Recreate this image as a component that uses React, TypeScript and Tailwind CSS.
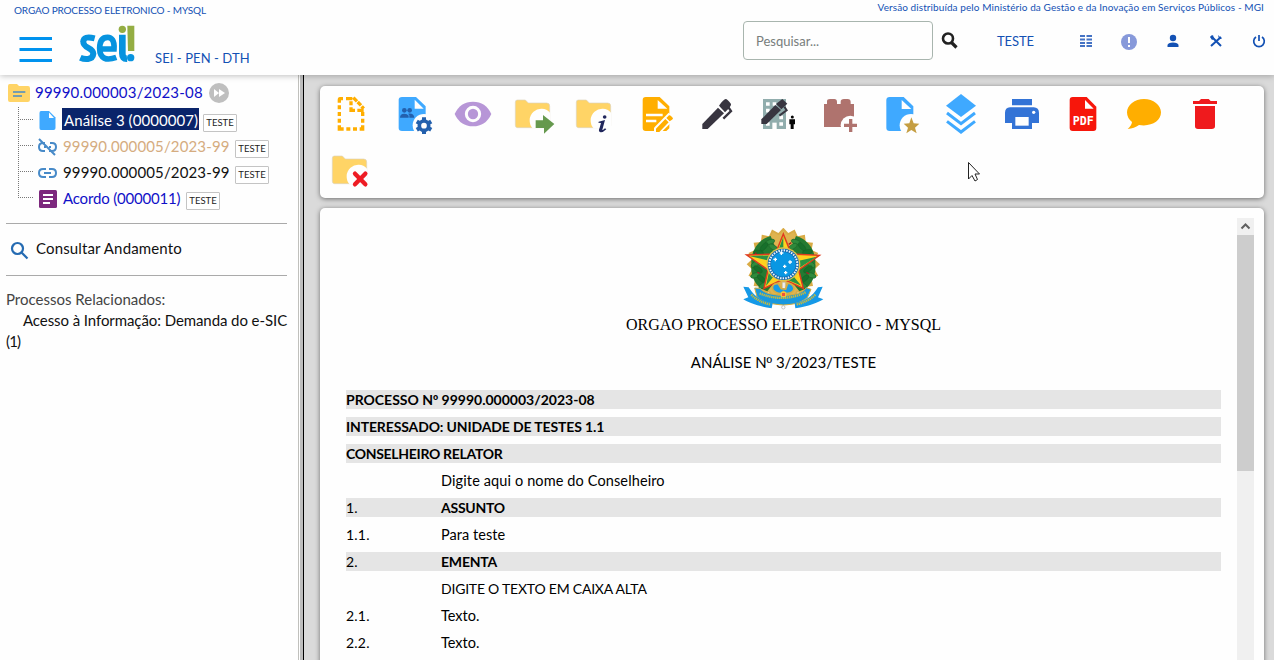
import React from "react";

const RALEWAY = "font-['Lato','Open_Sans',sans-serif]";

function CoatOfArms() {
  const points = (n: number, outer: number, inner: number, cx: number, cy: number) =>
    Array.from({ length: n * 2 }, (_, i) => {
      const r = i % 2 === 0 ? outer : inner;
      const a = (Math.PI * i) / n - Math.PI / 2;
      return `${(cx + r * Math.cos(a)).toFixed(1)},${(cy + r * Math.sin(a)).toFixed(1)}`;
    }).join(" ");
  const leaves: [number, number, number][] = [
    [150, 66, -20], [132, 80, -50], [160, 82, 30], [116, 98, 10], [106, 132, -35], [114, 148, 35], [106, 166, -20], [124, 176, 40],
    [130, 196, -30], [126, 128, 50], [228, 66, 20], [246, 80, 50], [218, 80, -30], [262, 96, -10], [272, 132, 35], [264, 148, -35],
    [274, 166, 20], [254, 176, -40], [248, 196, 30], [252, 128, -50],
  ];
  return (
    <svg width="82" height="82" viewBox="66 24 246 246" className="mr-[2px]">
      <polygon points={points(20, 110, 95, 190, 133)} fill="#d9ab45" />
      <polygon points={points(20, 101, 88, 190, 133)} fill="#dfb450" />
      <path d="M152 48C112 58 92 98 94 130C90 176 112 206 142 214L166 184L140 128L166 82ZM228 48C268 58 288 98 286 130C290 176 268 206 238 214L214 184L240 128L214 82Z" fill="#247a32" />
      {leaves.map(([x, y, r], i) => (
        <ellipse key={i} cx={x} cy={y} rx="15" ry="7" transform={`rotate(${r} ${x} ${y})`} fill={i % 2 ? "#17702b" : "#2f8a3c"} stroke="#176025" strokeWidth="1.5" />
      ))}
      <path d="M105 103l4-5M112 157l7 3M259 157l9 5M206 73l8-5" stroke="#a51f24" strokeWidth="4" />
      <path d="M190 42L214 102L298 106L236 150L250 205L190 177L132 205L144 150L80 105L166 102Z" fill="#ffd21f" stroke="#df3c20" strokeWidth="4.5" />
      <path d="M190 50V133L170 104ZM290 110L190 133L232 148ZM244 197L190 133V174ZM138 198L190 133L148 150ZM88 108L190 133L164 106Z" fill="#2b9344" />
      <circle cx="190" cy="133" r="51" fill="#e2c448" />
      <circle cx="190" cy="133" r="47" fill="#1468ae" />
      <circle cx="190" cy="133" r="42" fill="none" stroke="#e8f5ff" strokeWidth="6" strokeDasharray="4.5 3.4" />
      <circle cx="190" cy="133" r="37" fill="#0997e3" />
      <path d="M184 94v11M179 99h11M166 113v11M160 118h11M210 121v11M205 126h11M194 134v10M189 139h10M197 153v10M192 158h10" stroke="#fff" strokeWidth="4" />
      <path d="M187 187h9v34h-9z" fill="#eee" stroke="#aaa" />
      <path d="M174 190Q154 191 158 208Q165 220 184 221L190 215L200 221Q220 219 222 206Q219 189 203 190L197 207L184 206Z" fill="#189ce5" stroke="#d7ad43" strokeWidth="5" />
      <path d="M104 204L120 205C134 221 158 224 190 227C224 225 248 220 259 203L273 208L262 233C239 251 218 253 190 255C155 252 130 249 111 230Z" fill="#1798df" stroke="#d3ad3f" strokeWidth="3" />
      <path d="M70 200L86 202C103 230 126 244 158 250L155 265C117 260 85 247 70 238L85 232ZM308 200L294 202C277 230 254 244 224 250L226 265C266 260 294 248 310 238L294 232Z" fill="#1599e7" />
      <path d="M94 224Q115 246 150 253M286 224Q263 246 230 253M119 220Q190 249 257 217" fill="none" stroke="#c9ba3b" strokeWidth="7" strokeDasharray="4 2" />
      <path d="M184 217h13v13h-13z" fill="#f0503b" stroke="#f6d53d" strokeWidth="3" />
      <circle cx="190" cy="262" r="5" fill="#fff" stroke="#aaa" strokeWidth="2" />
    </svg>
  );
}

function Tool({ box, label, children }: { box: string; label: string; children: React.ReactNode }) {
  return (
    <button aria-label={label} className="block h-[56px] w-[61px]">
      <svg width="61" height="56" viewBox={box}>{children}</svg>
    </button>
  );
}

const folder = "M606 60H630L639 69H694Q703 69 703 78V136Q703 143 696 143H606Q600 143 600 136V67Q600 60 606 60Z";

function Folder({ x = 0, y = 0 }: { x?: number; y?: number }) {
  return (
    <g transform={`translate(${x} ${y})`}>
      <path d={folder} fill="#ffd466" stroke="#ddd3bd" strokeWidth="2" />
      <path d="M704 98A31 31 0 1 0 652 145H705Z" fill="#fefefe" />
    </g>
  );
}

function Toolbar() {
  return (
    <div className="flex h-[112px] shrink-0 flex-wrap content-start rounded-[5px] bg-[#fefefe] shadow-[0_1px_5px_rgba(0,0,0,0.5)]">
      <Tool label="Incluir Documento" box="15 18 183 168">
        <path d="M84 56H75Q73 56 73 60V68M73 76V88M73 96V108M73 116V128M73 136V147H86M94 147H106M114 147H126M134 147H143V136M143 128V116M143 108V96M93 56H112M115 53L126 64M128 66L138 76M140 79L146 86M108 64V76M108 82V91H120M127 91H146" fill="none" stroke="#ffae00" strokeWidth="10" />
      </Tool>
      <Tool label="Consultar Documento" box="197 18 183 168">
        <path d="M260 51H302L331 79V145Q331 153 322 153H260Q250 153 250 144V60Q250 51 260 51Z" fill="#3fa9ff" />
        <path d="M298 59V86H325Z" fill="#fefefe" />
        <circle cx="326" cy="136" r="34" fill="#fefefe" />
        <g fill="#2360ad"><circle cx="267" cy="91" r="7" /><circle cx="283" cy="91" r="7" /><path d="M254 113Q254 101 267 101Q276 101 280 107V113ZM282 113V106L278 101Q295 98 297 113Z" /></g>
        <circle cx="326" cy="137" r="14" fill="none" stroke="#2360ad" strokeWidth="11" />
        <path d="M326 112V120M326 154V162M304.300 124.500L311 128.500M341 145.500L347.700 149.500M304.300 149.500L311 145.500M341 128.500L347.700 124.500" stroke="#2360ad" strokeWidth="12" />
      </Tool>
      <Tool label="Acompanhamento Especial" box="381 18 183 168">
        <path d="M419 102Q436 65 474 65T529 102Q512 139 474 139T419 102Z" fill="#b796d7" />
        <circle cx="474" cy="102" r="20" fill="none" stroke="#fefefe" strokeWidth="9" />
      </Tool>
      <Tool label="Enviar Processo" box="563 18 183 168">
        <Folder />
        <path d="M661 121H683V105L717 132L686 161V144H661Z" fill="#66994e" />
      </Tool>
      <Tool label="Atualizar Andamento" box="746 18 183 168">
        <Folder x={183} />
        <path d="M850 125L869 120L861 149Q861 153 869 145L873 148Q860 160 854 156Q848 153 853 143L857 129L849 128Z" fill="#20265c" />
        <circle cx="868" cy="111" r="5.5" fill="#20265c" />
      </Tool>
      <Tool label="Editar Conteúdo" box="-15 18 183 168">
        <path d="M47 51H89L118 79V145L109 153H47Q38 153 38 144V60Q38 51 47 51Z" fill="#ffae00" />
        <path d="M83 60V86H112Z" fill="#fefefe" />
        <path d="M48 105H98M48 123H79" stroke="#fefefe" strokeWidth="7" />
        <path d="M72 160V143L116 98L135 116L91 160Z" fill="#fefefe" />
        <path d="M78 156V146L106 117L116 127L88 156ZM109 114L117 106Q120 104 128 113Q131 116 126 119L119 124Z" fill="#ffae00" />
      </Tool>
      <Tool label="Assinar Documento" box="167 18 183 168">
        <path d="M216 132L263 83L281 100L232 147H216Z" fill="#383540" />
        <path d="M266 77Q280 57 286 57Q291 57 302 72Q304 78 284 97Z" fill="#383540" />
        <path d="M293 80L302 93L279 116" fill="none" stroke="#383540" strokeWidth="7" />
      </Tool>
      <Tool label="Gerenciar Assinaturas Externas" box="351 18 183 168">
        <path d="M399 57H468V147H399Z" fill="#91adad" />
        <path d="M408 72H419M428 72H439M448 72H459M408 92H419M448 112H459M408 132H419M448 132H459" stroke="#fefefe" strokeWidth="11" />
        <path d="M427 147V128H440V147Z" fill="#fefefe" />
        <path d="M394 118L436 75L453 90L410 132H394Z" fill="#383540" />
        <path d="M438 72L457 57L472 71L454 88Z" fill="#383540" />
        <path d="M463 80L470 91L448 107" fill="none" stroke="#383540" strokeWidth="6" />
        <circle cx="487" cy="111" r="4.5" fill="#050505" />
        <path d="M478 118H495V133H491V147H482V133H478Z" fill="#050505" />
      </Tool>
      <Tool label="Incluir em Bloco" box="534 18 183 168">
        <path d="M582 72H591V64Q591 57 600 57H613Q621 57 621 66V72H632V65Q632 57 642 57H653Q662 57 662 66V72H672V141H582Z" fill="#af736e" />
        <circle cx="661" cy="136" r="29" fill="#fefefe" />
        <path d="M642 136H681M662 117V156" stroke="#af736e" strokeWidth="10" />
      </Tool>
      <Tool label="Adicionar aos Favoritos" box="717 18 183 168">
        <path d="M779 51H821L850 79V145L840 153H779Q769 153 769 144V60Q769 51 779 51Z" fill="#3fa9ff" />
        <path d="M815 60V87H844Z" fill="#fefefe" />
        <circle cx="843" cy="136" r="34" fill="#fefefe" />
        <path d="M844 112L851 130L868 131L855 143L860 160L844 150L829 160L834 143L821 131L838 130Z" fill="#c59e42" />
      </Tool>
      <Tool label="Versões do Documento" box="-45 18 183 168">
        <path d="M3 77L48 42L93 77L48 111Z" fill="#3fa9ff" />
        <path d="M6 99L48 131L90 99M6 124L48 156L90 124" fill="none" stroke="#3fa9ff" strokeWidth="9" />
      </Tool>
      <Tool label="Imprimir Web" box="138 18 183 168">
        <path d="M201 57H261V76H201ZM195 82H266Q282 83 282 99V129H261V147H201V129H180V99Q180 83 195 82Z" fill="#3373d6" />
        <path d="M211 111H251V137H211Z" fill="#fefefe" /><circle cx="266" cy="97" r="5" fill="#fefefe" />
      </Tool>
      <Tool label="Gerar PDF" box="321 18 183 168">
        <path d="M383 51H425L454 80V144Q454 153 445 153H383Q374 153 374 144V60Q374 51 383 51Z" fill="#f7160b" />
        <path d="M420 60V86H446Z" fill="#fefefe" />
        <text x="415" y="135" textAnchor="middle" textLength="63" lengthAdjust="spacingAndGlyphs" fill="#fff" className="font-['DejaVu_Sans_Mono',monospace] text-[37px] font-bold">PDF</text>
      </Tool>
      <Tool label="Comentários" box="504 18 183 168">
        <path d="M597 57C625 57 648 75 648 97C648 124 618 141 582 135Q568 146 548 147Q560 137 561 126Q546 114 546 97C546 75 569 57 597 57Z" fill="#ffae00" />
      </Tool>
      <Tool label="Excluir" box="687 18 183 168">
        <path d="M744 63H762L768 57H791L797 63H816V72H744ZM750 78H810V139Q810 147 800 147H759Q750 147 750 139Z" fill="#ef1a1d" />
      </Tool>
      <Tool label="Concluir Processo" box="14 186 183 168">
        <Folder x={-549} y={168} />
        <path d="M119 281L150 313M150 281L119 313" stroke="#ee1c24" strokeWidth="13" strokeLinecap="round" />
      </Tool>
    </div>
  );
}

function Tag() {
  return (
    <span className="flex h-[18px] w-[34px] items-center justify-center rounded-[1px] border border-[#c4c4c4] bg-white text-[9.5px] leading-none text-[#222]">
      TESTE
    </span>
  );
}

function Sidebar() {
  return (
    <aside className={`flex w-[298px] shrink-0 flex-col bg-[#fefefe] text-[15px] text-[#111] ${RALEWAY}`}>
      <div className="flex h-[32px] items-center pt-[4px] pl-[8px]">
        <svg width="22" height="18" viewBox="0 0 66 54" className="shrink-0">
          <path d="M5 0H27L33 6H60Q66 6 66 13V47Q66 54 59 54H6Q0 54 0 48V6Q0 0 5 0Z" fill="#ffd466" />
          <path d="M15 24H52M15 36H42" stroke="#478ac8" strokeWidth="5" />
        </svg>
        <span className="mt-[-2px] ml-[5px] w-[169px] text-[15px] tracking-[0.2px] whitespace-nowrap text-[#1010c8]">99990.000003/2023-08</span>
        <svg width="20" height="20" viewBox="0 0 20 20" className="ml-[5px]">
          <circle cx="10" cy="10" r="10" fill="#bfbfbf" /><path d="M5 6L10 10L5 14ZM10 6L16 10L10 14Z" fill="#fff" />
        </svg>
      </div>
      <div className="flex">
        <svg width="37" height="104" viewBox="0 107 37 104" className="shrink-0">
          <path d="M18.5 107V198M18 119.5H34M18 145.5H34M18 171.5H34M18 197.5H34" fill="none" stroke="#777" strokeDasharray="1 1" />
        </svg>
        <div className="flex flex-col">
          <div className="flex h-[26px] items-center">
            <svg width="21" height="22" viewBox="0 0 21 22" className="mt-[2px]"><path d="M4 1H12L18.500 7.500V18Q18.500 20 16.500 20H4Q2.500 20 2.500 18V3Q2.500 1 4 1Z" fill="#3fa9ff" /><path d="M12 2.500V8H17Z" fill="#fff" /></svg>
            <span className="mt-[-2px] ml-[4px] flex h-[22px] w-[137px] items-center bg-[#0a246a] pt-[2px] pl-[2px] tracking-[0.07px] whitespace-nowrap text-white">Análise 3 (0000007)</span>
            <div className="mt-[6px] ml-[4px]"><Tag /></div>
          </div>
          <div className="flex h-[26px] items-center">
            <svg width="21" height="20" viewBox="0 0 21 20" className="mt-[2px]"><path d="M8 6H6Q2 6 2 10T6 14H8M13 6H15Q19 6 19 10T15 14H12M7 10H9M12 10H14M2 2L18 18" fill="none" stroke="#478ac8" strokeWidth="2" /></svg>
            <span className="mt-px ml-[5px] w-[168px] tracking-[0.14px] whitespace-nowrap text-[#d5ac80]">99990.000005/2023-99</span>
            <div className="mt-[6px] ml-[4px]"><Tag /></div>
          </div>
          <div className="flex h-[26px] items-center">
            <svg width="21" height="20" viewBox="0 0 21 20" className="mt-[2px]"><path d="M9 6H6Q2 6 2 10T6 14H9M12 6H15Q19 6 19 10T15 14H12M7 10H14" fill="none" stroke="#478ac8" strokeWidth="2" /></svg>
            <span className="mt-px ml-[5px] w-[168px] tracking-[0.14px] whitespace-nowrap">99990.000005/2023-99</span>
            <div className="mt-[6px] ml-[4px]"><Tag /></div>
          </div>
          <div className="flex h-[26px] items-center">
            <svg width="21" height="20" viewBox="0 0 21 20" className="mt-[2px]"><rect x="2" y="1" width="18" height="18" rx="1.500" fill="#7c287d" /><path d="M6 6H16M6 10H16M6 14H13" stroke="#fff" strokeWidth="2" /></svg>
            <span className="mt-px ml-[5px] w-[119px] tracking-[-0.18px] whitespace-nowrap text-[#1010c8]">Acordo (0000011)</span>
            <div className="mt-[6px] ml-[4px]"><Tag /></div>
          </div>
        </div>
      </div>
      <div className="mt-[12px] mr-[11px] ml-[6px] flex h-[53px] items-center border-y border-[#aaa]">
        <svg width="20" height="20" viewBox="0 0 20 20" className="mt-[2px] ml-[4px]"><circle cx="7.500" cy="7.500" r="5.500" fill="none" stroke="#256bb2" strokeWidth="2.200" /><path d="M11.500 11.500L17.500 17.500" stroke="#256bb2" strokeWidth="2.200" /></svg>
        <span className="mt-[-3px] ml-[6px] tracking-[0.14px] whitespace-nowrap">Consultar Andamento</span>
      </div>
      <div className="mt-[13px] ml-[6px] flex flex-col text-[15px] leading-[21px] whitespace-nowrap">
        <span className="text-[#444]">Processos Relacionados:</span>
        <span className="pl-[17px] tracking-[-0.08px]">Acesso à Informação: Demanda do e-SIC</span>
        <span className="tracking-[-0.8px]">(1)</span>
      </div>
    </aside>
  );
}

function Header() {
  return (
    <header className={`relative z-10 flex h-[75px] shrink-0 justify-between bg-[#fefefe] text-[#1351b4] shadow-[0_1px_6px_rgba(0,0,0,0.25)] ${RALEWAY}`}>
      <div className="flex flex-col pl-[14px]">
        <span className="mt-[4px] text-[10px] leading-[13px] tracking-[-0.16px] whitespace-nowrap">ORGAO PROCESSO ELETRONICO - MYSQL</span>
        <div className="flex">
          <svg width="34" height="27" viewBox="0 0 34 27" className="mt-[19px] ml-[5px]"><path d="M0.500 2.500H33M0.500 13.500H33M0.500 24.500H33" stroke="#0092ee" strokeWidth="3" /></svg>
          <svg width="58" height="40" viewBox="237 72 174 120" className="mt-[7px] ml-[26px]">
            <g fill="none" stroke="#0793df" strokeWidth="18">
              <path d="M284 115Q250 106 250 126C249 145 280 142 280 161C278 182 252 178 241 173" />
              <path d="M301 147H342C344 121 334 112 323 112C304 112 299 127 299 145C299 176 319 183 349 172" strokeWidth="17" />
              <path d="M367 104V160Q367 177 381 176" strokeWidth="20" />
            </g>
            <circle cx="367" cy="88" r="11" fill="#94ad43" /><path d="M382 77H403V153H384Z" fill="#94ad43" /><circle cx="392" cy="173" r="11" fill="#0793df" />
          </svg>
          <span className="mt-[33px] ml-[18px] text-[13px] leading-[16px] tracking-[0.08px] whitespace-nowrap">SEI - PEN - DTH</span>
        </div>
      </div>
      <div className="flex flex-col items-end">
        <span className="mt-px mr-[10px] text-[10px] leading-[13px] tracking-[0.085px] whitespace-nowrap">Versão distribuída pelo Ministério da Gestão e da Inovação em Serviços Públicos - MGI</span>
        <div className="mt-[6px] flex h-[40px] w-[531px] items-center">
          <div className="flex h-[39px] w-[190px] items-center rounded-[4px] border border-[#a8b5ae] pt-[4px] pl-[12px] text-[13px] text-[#777d7c]">Pesquisar...</div>
          <svg width="18" height="18" viewBox="0 0 18 18" className="ml-[8px]"><circle cx="7" cy="7.500" r="5" fill="none" stroke="#222" strokeWidth="2.600" /><path d="M10.500 11.500L15.500 16.500" stroke="#222" strokeWidth="3.200" /></svg>
          <span className="mt-[4px] ml-[38px] w-[37px] text-[13px] tracking-[-0.1px] whitespace-nowrap">TESTE</span>
          <svg width="14" height="14" viewBox="0 0 14 14" className="mt-[2px] ml-[45px]"><path d="M1 2H6M1 5.500H6M1 9H6M1 12H6M7.500 2H13M7.500 5.500H13M7.500 9H13M7.500 12H13" stroke="#4472c4" strokeWidth="2" /></svg>
          <svg width="18" height="18" viewBox="0 0 18 18" className="mt-[3px] ml-[27px]"><circle cx="9" cy="9" r="8" fill="#8799da" /><path d="M9 4V10M9 12V14" stroke="#fff" strokeWidth="2" /></svg>
          <svg width="14" height="14" viewBox="0 0 14 14" className="mt-[2px] ml-[28px]"><circle cx="7" cy="4" r="3.200" fill="#1351b4" /><path d="M1.500 13V11Q2 8.500 7 8.500T12.500 11V13Z" fill="#1351b4" /></svg>
          <svg width="14" height="14" viewBox="0 0 14 14" className="mt-[2px] ml-[29px]"><path d="M2 2L12 12M12 3L2 12" stroke="#1351b4" strokeWidth="2" /><path d="M1 3L4 1L5 5L3 6ZM9 1L13 5L10 5Z" fill="#1351b4" /></svg>
          <svg width="14" height="14" viewBox="0 0 14 14" className="mt-[2px] ml-[29px]"><path d="M7 1V7M4 3A5.300 5.300 0 1 0 10 3" fill="none" stroke="#1351b4" strokeWidth="1.700" /></svg>
        </div>
      </div>
    </header>
  );
}

const rows = [
  { num: "1.", text: "ASSUNTO", style: "font-bold tracking-[-0.25px]", head: true },
  { num: "1.1.", text: "Para teste", style: "text-[14.5px] tracking-[0.05px]" },
  { num: "2.", text: "EMENTA", style: "font-bold tracking-[-0.2px]", head: true },
  { num: "", text: "DIGITE O TEXTO EM CAIXA ALTA", style: "tracking-[-0.22px]" },
  { num: "2.1.", text: "Texto.", style: "text-[14.5px]" },
  { num: "2.2.", text: "Texto.", style: "text-[14.5px]" },
];

function Ordinal() {
  return <span className="font-['Liberation_Sans',sans-serif] leading-none">º</span>;
}

function Document() {
  return (
    <div className="mt-[10px] flex h-[470px] shrink-0 rounded-[5px] bg-[#fefefe] p-[10px] shadow-[0_1px_5px_rgba(0,0,0,0.5)]">
      <article className="flex flex-1 flex-col px-[16px] font-['Lato','Open_Sans',sans-serif] text-[14px] text-black">
        <div className="flex flex-col items-center pt-[10px]">
          <CoatOfArms />
          <p className="mt-[5px] font-['Liberation_Serif',serif] text-[16px] leading-[20px] tracking-[-0.02px]">ORGAO PROCESSO ELETRONICO - MYSQL</p>
          <p className="mt-[17px] h-[20px] text-[15px] leading-[20px]">ANÁLISE N<Ordinal /> 3/2023/TESTE</p>
        </div>
        <div className="mt-[18px] flex flex-col gap-[8px] leading-[19px] whitespace-nowrap">
          <p className="h-[19px] bg-[#e5e5e5] font-bold">PROCESSO N<Ordinal /> 99990.000003/2023-08</p>
          <p className="h-[19px] bg-[#e5e5e5] font-bold tracking-[-0.13px]">INTERESSADO: UNIDADE DE TESTES 1.1</p>
          <p className="h-[19px] bg-[#e5e5e5] font-bold tracking-[-0.3px]">CONSELHEIRO RELATOR</p>
          <p className="h-[19px] pl-[95px] text-[14.5px] tracking-[0.12px]">Digite aqui o nome do Conselheiro</p>
          {rows.map((r, i) => (
            <div key={i} className={r.head ? "flex h-[19px] bg-[#e5e5e5]" : "flex h-[19px]"}>
              <span className="w-[95px] tracking-[0.2px]">{r.num}</span>
              <span className={r.style}>{r.text}</span>
            </div>
          ))}
        </div>
      </article>
      <div className="flex w-[17px] flex-col bg-[#f0f0f0]">
        <svg width="17" height="17" viewBox="0 0 17 17"><path d="M4.500 10.500L8.500 6.500L12.500 10.500" fill="none" stroke="#606060" strokeWidth="2" /></svg>
        <div className="h-[236px] bg-[#cdcdcd]" />
      </div>
    </div>
  );
}

export default function App() {
  return (
    <div className="relative flex h-[660px] w-[1274px] flex-col overflow-hidden bg-[#fefefe]">
      <Header />
      <div className="flex min-h-0 flex-1">
        <Sidebar />
        <div className="flex w-[6px] shrink-0 border-l border-l-[#c0c0bc] bg-[#fefefe]">
          <div className="ml-[1px] flex-1 border-r border-r-black bg-[#bdbdbd]" />
        </div>
        <main className="flex min-w-0 flex-1 flex-col overflow-hidden bg-[#dadada] pt-[11px] pr-[10px] pl-[16px]">
          <Toolbar />
          <Document />
        </main>
      </div>
      <svg width="14" height="21" viewBox="0 0 14 21" className="absolute top-[161px] left-[967px] z-20"><path d="M1.500 1.500V18L5 14.500L8 20L10.500 18.500L8 13H12.500Z" fill="#fff" stroke="#222" /></svg>
    </div>
  );
}
